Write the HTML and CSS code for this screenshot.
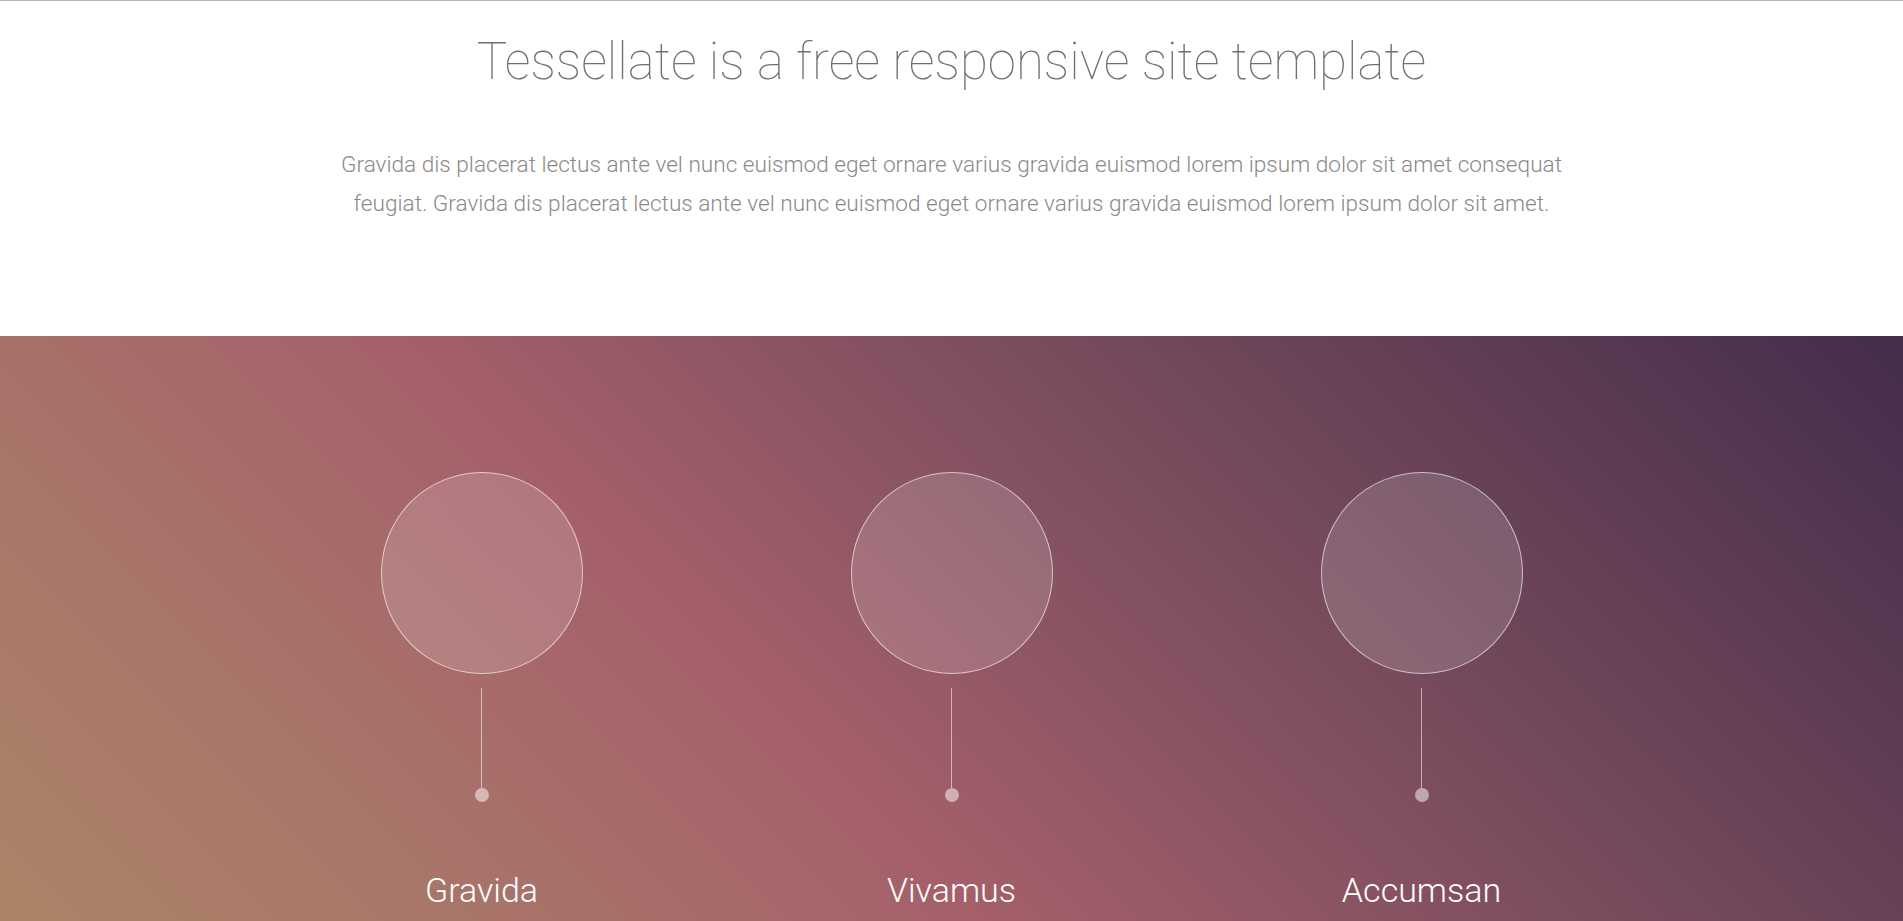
FILE: index.html
```html
<!DOCTYPE html>
<html lang="en">
  <head>
    <meta charset="UTF-8" />
    <meta name="viewport" content="width=device-width, initial-scale=1.0" />
    <title>Tessellate</title>
    <link rel="stylesheet" href="styles.css">
  </head>
  <body>
    <section class="intro">
      <h1>Tessellate is a free responsive site template</h1>
      <p>
        Gravida dis placerat lectus ante vel nunc euismod eget ornare varius gravida euismod lorem ipsum dolor sit amet consequat
        feugiat. Gravida dis placerat lectus ante vel nunc euismod eget ornare varius gravida euismod lorem ipsum dolor sit amet.
      </p>
    </section>

    <section class="features">
      <div class="feature-row">
        <div class="feature">
          <div class="circle"></div>
          <div class="stem"></div>
          <div class="dot"></div>
          <h2>Gravida</h2>
        </div>
        <div class="feature">
          <div class="circle"></div>
          <div class="stem"></div>
          <div class="dot"></div>
          <h2>Vivamus</h2>
        </div>
        <div class="feature">
          <div class="circle"></div>
          <div class="stem"></div>
          <div class="dot"></div>
          <h2>Accumsan</h2>
        </div>
      </div>
    </section>
  </body>
</html>
```

FILE: styles.css
```css
body {
  margin: 0;
  font-family: Roboto, "Liberation Sans", sans-serif;
  background: #fff;
  border-top: 1px solid #b3b3b3;
}

.intro {
  text-align: center;
  padding: 28px 0 0;
  height: 335px;
  box-sizing: border-box;
}

.intro h1 {
  margin: 0;
  font-size: 51px;
  font-weight: 100;
  color: #707070;
  line-height: 66px;
}

.intro p {
  margin: 50px auto 0;
  max-width: 1240px;
  font-size: 22.6px;
  font-weight: 300;
  line-height: 39px;
  color: #8a8a8a;
}

.features {
  background: linear-gradient(45deg, #ad8766 0%, #a8746a 24%, #a5606a 42%, #7f4f5f 63%, #432d4b 100%);
  height: 700px;
  padding-top: 136px;
  box-sizing: border-box;
}

.feature-row {
  display: grid;
  grid-template-columns: repeat(3, 470px);
  justify-content: center;
}

.feature {
  display: flex;
  flex-direction: column;
  align-items: center;
}

.circle {
  width: 202px;
  height: 202px;
  border-radius: 50%;
  box-sizing: border-box;
  border: 1px solid rgba(255, 255, 255, 0.6);
  background: rgba(255, 255, 255, 0.15);
}

.stem {
  width: 1px;
  height: 100px;
  margin-top: 14px;
  background: rgba(255, 255, 255, 0.55);
}

.dot {
  width: 14px;
  height: 14px;
  border-radius: 50%;
  background: rgba(255, 255, 255, 0.5);
}

.feature h2 {
  margin: 68px 0 0;
  font-size: 34px;
  font-weight: 300;
  color: #fff;
}
```
